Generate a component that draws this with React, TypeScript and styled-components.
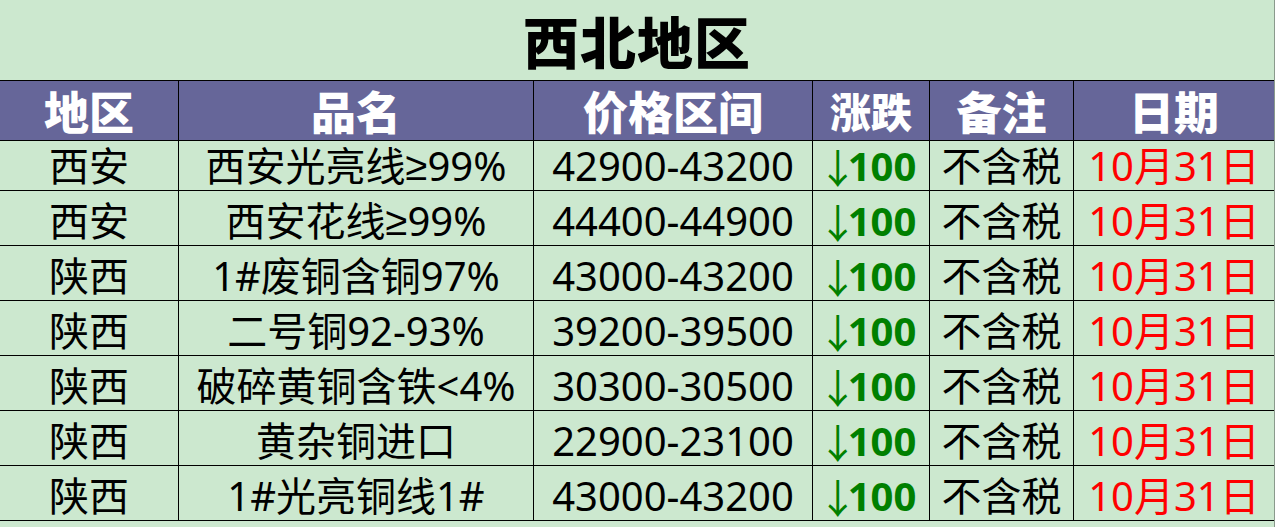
import React from "react";
import styled, { createGlobalStyle } from "styled-components";

const Global = createGlobalStyle`
  html, body { margin: 0; padding: 0; background: #cce8cf; }
  body { font-family: "Noto Sans", "Noto Sans CJK SC", sans-serif; }
`;

const Page = styled.div`
  width: 1275px;
  height: 527px;
  box-sizing: border-box;
  border-right: 1px solid #8a9a8c;
  background: #cce8cf;
  overflow: hidden;
`;

const Title = styled.div`
  height: 80px;
  display: flex;
  align-items: center;
  justify-content: center;
  font-family: "Noto Sans CJK SC", sans-serif;
  font-size: 56px;
  font-weight: 900;
  line-height: 1;
  color: #000;
  letter-spacing: 1px;
`;

const Grid = styled.div`
  display: grid;
  grid-template-columns: 179px 355px 279px 117px 144px 1fr;
  grid-auto-rows: 55px;
  border-top: 1px solid #000;
`;

const Head = styled.div<{ $size?: number; $last?: boolean }>`
  height: 60px;
  box-sizing: border-box;
  background: #666699;
  color: #fff;
  font-family: "Noto Sans CJK SC", sans-serif;
  font-weight: 900;
  font-size: ${(p) => p.$size ?? 45}px;
  line-height: 1;
  display: flex;
  align-items: center;
  justify-content: center;
  border-right: ${(p) => (p.$last ? "none" : "1px solid #000")};
  border-bottom: 1px solid #000;
`;

const Cell = styled.div<{ $color?: string; $last?: boolean }>`
  box-sizing: border-box;
  display: flex;
  align-items: center;
  justify-content: center;
  padding-top: 5px;
  font-size: 40px;
  color: ${(p) => p.$color ?? "#000"};
  border-right: ${(p) => (p.$last ? "none" : "1px solid #000")};
  border-bottom: 1px solid #000;
  white-space: nowrap;
  line-height: 1;
`;

const Sym = styled.span`
  font-family: "Liberation Sans", sans-serif;
`;

const Down = styled.span`
  font-family: "Noto Sans CJK SC", sans-serif;
  font-weight: 400;
  font-size: 40px;
  line-height: 1;
  margin-left: -8px;
  letter-spacing: -10px;
`;

const Bold = styled.span`
  font-weight: 700;
`;

const renderName = (s: string) => {
  const parts = s.split("≥");
  if (parts.length === 1) return s;
  return (
    <>
      {parts[0]}
      <Sym>≥</Sym>
      {parts[1]}
    </>
  );
};

const rows = [
  ["西安", "西安光亮线≥99%", "42900-43200"],
  ["西安", "西安花线≥99%", "44400-44900"],
  ["陕西", "1#废铜含铜97%", "43000-43200"],
  ["陕西", "二号铜92-93%", "39200-39500"],
  ["陕西", "破碎黄铜含铁<4%", "30300-30500"],
  ["陕西", "黄杂铜进口", "22900-23100"],
  ["陕西", "1#光亮铜线1#", "43000-43200"],
];

export default function App() {
  return (
    <>
      <Global />
      <Page>
        <Title>西北地区</Title>
        <Grid>
          <Head>地区</Head>
          <Head>品名</Head>
          <Head>价格区间</Head>
          <Head $size={41}>涨跌</Head>
          <Head>备注</Head>
          <Head $last>日期</Head>
          {rows.map((r, i) => (
            <React.Fragment key={i}>
              <Cell>{r[0]}</Cell>
              <Cell>{renderName(r[1])}</Cell>
              <Cell>{r[2]}</Cell>
              <Cell $color="#008000">
                <Down>↓</Down>
                <Bold>100</Bold>
              </Cell>
              <Cell>不含税</Cell>
              <Cell $color="#ff0000" $last>
                10月31日
              </Cell>
            </React.Fragment>
          ))}
        </Grid>
      </Page>
    </>
  );
}
